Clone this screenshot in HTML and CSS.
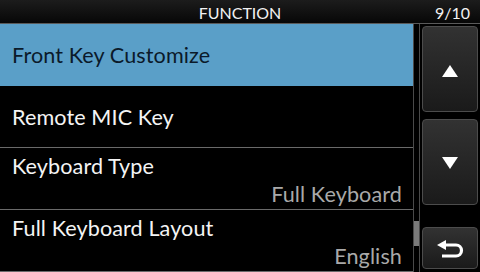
FILE: index.html
```html
<!DOCTYPE html>
<html>
<head>
<meta charset="utf-8">
<link rel="stylesheet" href="styles.css">
</head>
<body>
<div class="screen">
  <header class="titlebar">
    <span></span>
    <span class="title">FUNCTION</span>
    <span class="page">9/10</span>
  </header>
  <main class="main">
    <ul class="list">
      <li class="row row-single selected"><span class="label">Front Key Customize</span></li>
      <li class="row row-single"><span class="label">Remote MIC Key</span></li>
      <li class="row row-double"><span class="label">Keyboard Type</span><span class="value">Full Keyboard</span></li>
      <li class="row row-double"><span class="label">Full Keyboard Layout</span><span class="value">English</span></li>
    </ul>
    <div class="scrollbar">
      <div class="thumb" style="margin-top:197px;height:25px"></div>
    </div>
    <nav class="buttons">
      <button class="btn btn-tall">
        <svg width="16" height="12" viewBox="0 0 16 12"><polygon points="8,0 16,12 0,12" fill="#fff"/></svg>
      </button>
      <button class="btn btn-tall btn-down">
        <svg width="16" height="12" viewBox="0 0 16 12"><polygon points="0,0 16,0 8,12" fill="#fff"/></svg>
      </button>
      <button class="btn btn-short btn-back">
        <svg width="27" height="18" viewBox="0 0 27 18"><polygon points="0,5 9,0 9,10" fill="#fff"/><path d="M8 5 H19 A5.5 5.5 0 0 1 19 16 H5" fill="none" stroke="#fff" stroke-width="3.2"/></svg>
      </button>
    </nav>
  </main>
</div>
</body>
</html>
```
FILE: styles.css
```css
* { box-sizing: border-box; }
html, body { margin: 0; padding: 0; background: #000; }
.screen {
  width: 480px;
  height: 272px;
  display: flex;
  flex-direction: column;
  background: #000;
  font-family: Lato, "Open Sans", sans-serif;
  overflow: hidden;
}
.titlebar {
  height: 24px;
  flex: none;
  display: grid;
  grid-template-columns: 1fr auto 1fr;
  align-items: start;
  padding: 2px 10px 0 10px;
  line-height: 21px;
  font-size: 16px;
  color: #f2f2f2;
  background: linear-gradient(to bottom, #1c1c1c, #070707);
  border-bottom: 1px solid #5a5a5a;
}
.title { text-align: center; }
.page { justify-self: end; }
.main {
  flex: 1;
  display: flex;
  min-height: 0;
}
.list {
  list-style: none;
  margin: 0;
  padding: 0;
  width: 414px;
  flex: none;
  border-right: 1px solid #4a4a4a;
}
.row {
  height: 62px;
  border-bottom: 1px solid #6a6a6a;
  display: flex;
  flex-direction: column;
  padding-left: 12px;
  padding-right: 11px;
  font-size: 21.6px;
  letter-spacing: 0.1px;
  line-height: 24px;
  color: #f4f4f4;
}
.row-single { justify-content: center; }
.row-double { padding-top: 6px; gap: 4px; }
.selected {
  background: #5a9fc8;
  color: #0b1a2a;
  border-bottom-color: #5a9fc8;
}
.value {
  align-self: flex-end;
  color: #a9a9a9;
}
.scrollbar {
  width: 6px;
  flex: none;
  border-right: 1px solid #4a4a4a;
  display: flex;
  flex-direction: column;
}
.thumb {
  width: 5px;
  background: #7a7a7a;
}
.buttons {
  flex: 1;
  display: flex;
  flex-direction: column;
  padding: 2px 3px 0 2px;
}
.btn {
  margin: 0;
  padding: 0;
  width: 56px;
  border: 1px solid #4c4c4c;
  border-radius: 4px;
  background: linear-gradient(to bottom, #323232, #1a1a1a);
  display: flex;
  align-items: center;
  justify-content: center;
}
.btn svg { display: block; }
.btn-tall { height: 86px; padding-top: 4px; }
.btn-down { margin-top: 7px; padding-top: 2px; }
.btn-short { height: 42px; }
.btn-back { margin-top: 22px; padding-top: 2px; }
```
